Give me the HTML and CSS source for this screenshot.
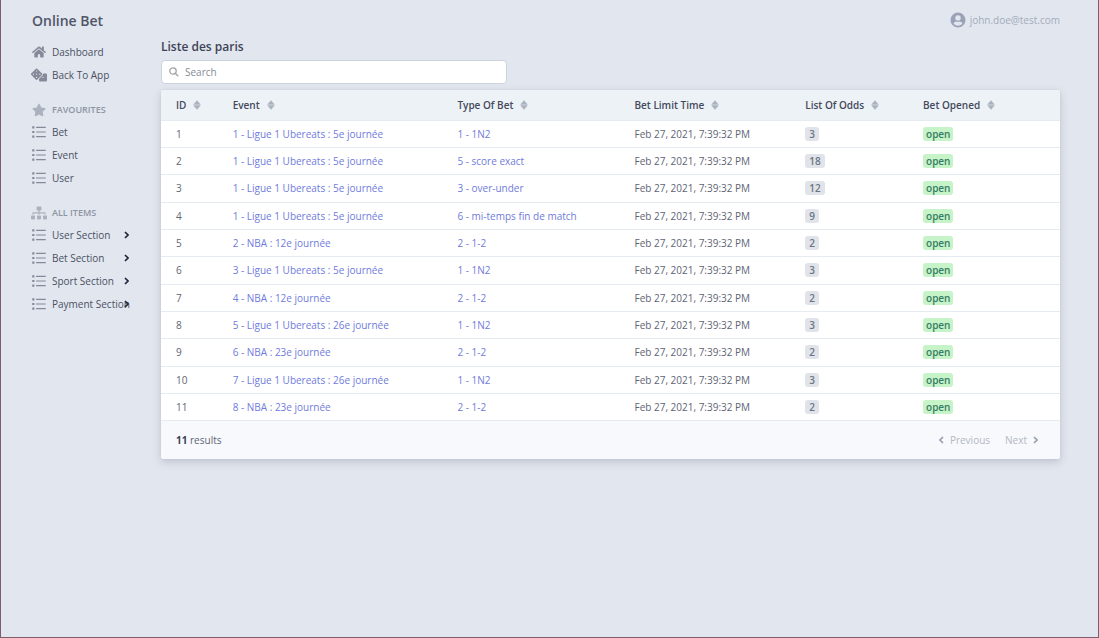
FILE: index.html
```html
<!DOCTYPE html>
<html lang="en">
<head>
<meta charset="utf-8">
<title>Online Bet</title>
<link rel="stylesheet" href="styles.css">
</head>
<body>
<svg class="sprite" aria-hidden="true">
  <symbol id="home" viewBox="0 0 576 512"><path d="M280 148 96 300v164a16 16 0 0 0 16 16h112a16 16 0 0 0 16-16v-96a16 16 0 0 1 16-16h64a16 16 0 0 1 16 16v96a16 16 0 0 0 16 16h112a16 16 0 0 0 16-16V300L296 148a12 12 0 0 0-16 0zM572 251l-84-69V44a12 12 0 0 0-12-12h-56a12 12 0 0 0-12 12v72l-89-74a48 48 0 0 0-61 0L4 251a12 12 0 0 0-1 17l25 31a12 12 0 0 0 17 2L280 107a12 12 0 0 1 16 0l235 194a12 12 0 0 0 17-2l25-31a12 12 0 0 0-1-17z"/></symbol>
  <symbol id="dice" viewBox="0 0 640 512"><path fill-rule="evenodd" d="M592 192H473c13 29 7 65-17 88L320 417v47a48 48 0 0 0 48 48h224a48 48 0 0 0 48-48V240a48 48 0 0 0-48-48zM480 376a24 24 0 1 1 0-48 24 24 0 0 1 0 48zM434 190 258 14a48 48 0 0 0-68 0L14 190a48 48 0 0 0 0 68l176 176a48 48 0 0 0 68 0l176-176a48 48 0 0 0 0-68zM96 248a24 24 0 1 1 0-48 24 24 0 0 1 0 48zm128 128a24 24 0 1 1 0-48 24 24 0 0 1 0 48zm0-128a24 24 0 1 1 0-48 24 24 0 0 1 0 48zm0-128a24 24 0 1 1 0-48 24 24 0 0 1 0 48zm128 128a24 24 0 1 1 0-48 24 24 0 0 1 0 48z"/></symbol>
  <symbol id="star" viewBox="0 0 576 512"><path d="m259 18-65 132-146 21c-26 4-37 36-18 55l106 103-25 145c-5 26 23 46 46 34l131-69 131 69c23 12 51-8 46-34l-25-145 106-103c19-19 8-51-18-55l-146-21-65-132c-12-24-46-24-58 0z"/></symbol>
  <symbol id="list" viewBox="0 0 512 512"><path d="M8 48h80v76H8zM8 218h80v76H8zM8 388h80v76H8zM150 66h354v42H150zM150 235h354v42H150zM150 404h354v42H150z"/></symbol>
  <symbol id="tree" viewBox="0 0 640 512"><path d="M128 352H32a32 32 0 0 0-32 32v96a32 32 0 0 0 32 32h96a32 32 0 0 0 32-32v-96a32 32 0 0 0-32-32zm-24-80h192v48h48v-48h192v48h48v-57c0-21-17-39-39-39H344v-64h40a32 32 0 0 0 32-32V32a32 32 0 0 0-32-32H256a32 32 0 0 0-32 32v96a32 32 0 0 0 32 32h40v64H95c-22 0-39 18-39 39v57h48zm264 80h-96a32 32 0 0 0-32 32v96a32 32 0 0 0 32 32h96a32 32 0 0 0 32-32v-96a32 32 0 0 0-32-32zm240 0h-96a32 32 0 0 0-32 32v96a32 32 0 0 0 32 32h96a32 32 0 0 0 32-32v-96a32 32 0 0 0-32-32z"/></symbol>
  <symbol id="right" viewBox="0 0 5 8"><path d="m1 1 3 3-3 3" fill="none" stroke="currentColor" stroke-width="1.7"/></symbol>
  <symbol id="left" viewBox="0 0 5 8"><path d="M4 1 1 4l3 3" fill="none" stroke="currentColor" stroke-width="1.7"/></symbol>
  <symbol id="sort" viewBox="0 0 8 10"><path d="M4 .6 7.300 4.400H.7zM4 9.400.7 5.600h6.600z" stroke="currentColor" stroke-width=".5" stroke-linejoin="round"/></symbol>
  <symbol id="search" viewBox="0 0 10 10"><g fill="none" stroke="currentColor" stroke-width="1.3"><circle cx="4" cy="4" r="3.200"/><path d="M6.400 6.400 9.300 9.300"/></g></symbol>
  <symbol id="user" viewBox="0 0 16 16"><path fill-rule="evenodd" d="M8 .5a7.500 7.500 0 1 0 0 15 7.500 7.500 0 0 0 0-15zm0 2.700a2.700 2.700 0 1 1 0 5.400 2.700 2.700 0 0 1 0-5.400zm0 10.500c-1.800 0-3.500-.9-4.400-2.200.5-1.200 1.700-1.900 2.900-1.900.9.400 2.100.4 3 0 1.200 0 2.400.7 2.900 1.900C11.500 12.800 9.800 13.700 8 13.700z"/></symbol>
</svg>
<div class="page">
  <aside class="sidebar">
    <a class="brand" href="#">Online Bet</a>
    <nav class="menu">
      <a class="item" href="#"><svg class="icon"><use href="#home"/></svg>Dashboard</a>
      <a class="item" href="#"><svg class="icon wide"><use href="#dice"/></svg>Back To App</a>
      <h2 class="group"><svg class="icon"><use href="#star"/></svg>FAVOURITES</h2>
      <a class="item" href="#"><svg class="icon"><use href="#list"/></svg>Bet</a>
      <a class="item" href="#"><svg class="icon"><use href="#list"/></svg>Event</a>
      <a class="item" href="#"><svg class="icon"><use href="#list"/></svg>User</a>
      <h2 class="group"><svg class="icon wide"><use href="#tree"/></svg>ALL ITEMS</h2>
      <a class="item" href="#"><svg class="icon"><use href="#list"/></svg><span class="label">User Section</span><svg class="chevron"><use href="#right"/></svg></a>
      <a class="item" href="#"><svg class="icon"><use href="#list"/></svg><span class="label">Bet Section</span><svg class="chevron"><use href="#right"/></svg></a>
      <a class="item" href="#"><svg class="icon"><use href="#list"/></svg><span class="label">Sport Section</span><svg class="chevron"><use href="#right"/></svg></a>
      <a class="item" href="#"><svg class="icon"><use href="#list"/></svg><span class="label">Payment Section</span><svg class="chevron"><use href="#right"/></svg></a>
    </nav>
  </aside>
  <main class="content">
    <header class="topbar"><a class="account" href="#"><svg class="avatar"><use href="#user"/></svg>john.doe@test.com</a></header>
    <h1 class="title">Liste des paris</h1>
    <label class="search"><svg class="search-icon"><use href="#search"/></svg><input class="search-input" type="search" placeholder="Search" aria-label="Search"></label>
    <section class="card">
      <table class="bets">
        <colgroup><col class="c-id"><col class="c-event"><col class="c-type"><col class="c-time"><col class="c-odds"><col></colgroup>
        <thead><tr>
          <th>ID<svg class="sort"><use href="#sort"/></svg></th>
          <th>Event<svg class="sort"><use href="#sort"/></svg></th>
          <th>Type Of Bet<svg class="sort"><use href="#sort"/></svg></th>
          <th>Bet Limit Time<svg class="sort"><use href="#sort"/></svg></th>
          <th>List Of Odds<svg class="sort"><use href="#sort"/></svg></th>
          <th>Bet Opened<svg class="sort"><use href="#sort"/></svg></th>
        </tr></thead>
        <tbody>
          <tr><td>1</td><td><a href="#">1 - Ligue 1 Ubereats : 5e journée</a></td><td><a href="#">1 - 1N2</a></td><td>Feb 27, 2021, 7:39:32 PM</td><td><span class="badge">3</span></td><td><span class="badge open">open</span></td></tr>
          <tr><td>2</td><td><a href="#">1 - Ligue 1 Ubereats : 5e journée</a></td><td><a href="#">5 - score exact</a></td><td>Feb 27, 2021, 7:39:32 PM</td><td><span class="badge">18</span></td><td><span class="badge open">open</span></td></tr>
          <tr><td>3</td><td><a href="#">1 - Ligue 1 Ubereats : 5e journée</a></td><td><a href="#">3 - over-under</a></td><td>Feb 27, 2021, 7:39:32 PM</td><td><span class="badge">12</span></td><td><span class="badge open">open</span></td></tr>
          <tr><td>4</td><td><a href="#">1 - Ligue 1 Ubereats : 5e journée</a></td><td><a href="#">6 - mi-temps fin de match</a></td><td>Feb 27, 2021, 7:39:32 PM</td><td><span class="badge">9</span></td><td><span class="badge open">open</span></td></tr>
          <tr><td>5</td><td><a href="#">2 - NBA : 12e journée</a></td><td><a href="#">2 - 1-2</a></td><td>Feb 27, 2021, 7:39:32 PM</td><td><span class="badge">2</span></td><td><span class="badge open">open</span></td></tr>
          <tr><td>6</td><td><a href="#">3 - Ligue 1 Ubereats : 5e journée</a></td><td><a href="#">1 - 1N2</a></td><td>Feb 27, 2021, 7:39:32 PM</td><td><span class="badge">3</span></td><td><span class="badge open">open</span></td></tr>
          <tr><td>7</td><td><a href="#">4 - NBA : 12e journée</a></td><td><a href="#">2 - 1-2</a></td><td>Feb 27, 2021, 7:39:32 PM</td><td><span class="badge">2</span></td><td><span class="badge open">open</span></td></tr>
          <tr><td>8</td><td><a href="#">5 - Ligue 1 Ubereats : 26e journée</a></td><td><a href="#">1 - 1N2</a></td><td>Feb 27, 2021, 7:39:32 PM</td><td><span class="badge">3</span></td><td><span class="badge open">open</span></td></tr>
          <tr><td>9</td><td><a href="#">6 - NBA : 23e journée</a></td><td><a href="#">2 - 1-2</a></td><td>Feb 27, 2021, 7:39:32 PM</td><td><span class="badge">2</span></td><td><span class="badge open">open</span></td></tr>
          <tr><td>10</td><td><a href="#">7 - Ligue 1 Ubereats : 26e journée</a></td><td><a href="#">1 - 1N2</a></td><td>Feb 27, 2021, 7:39:32 PM</td><td><span class="badge">3</span></td><td><span class="badge open">open</span></td></tr>
          <tr><td>11</td><td><a href="#">8 - NBA : 23e journée</a></td><td><a href="#">2 - 1-2</a></td><td>Feb 27, 2021, 7:39:32 PM</td><td><span class="badge">2</span></td><td><span class="badge open">open</span></td></tr>
        </tbody>
      </table>
      <footer class="pager">
        <p class="count"><strong>11</strong> results</p>
        <button class="page-button" type="button" disabled><svg class="chevron"><use href="#left"/></svg>Previous</button>
        <button class="page-button" type="button" disabled>Next<svg class="chevron"><use href="#right"/></svg></button>
      </footer>
    </section>
  </main>
</div>
</body>
</html>
```
FILE: styles.css
```css
* { box-sizing: border-box; }
body {
  margin: 0;
  font: 10px/16px "Open Sans", "Noto Sans", sans-serif;
  color: #5e6473;
  background: #e2e6ee;
}
a { color: inherit; text-decoration: none; }
svg { fill: currentColor; flex: none; }
.sprite { position: absolute; width: 0; height: 0; }
.page {
  display: flex;
  min-height: 100vh;
  padding: 0 38px 0 31px;
  border: solid #805d6b;
  border-width: 0 1px 1px;
}

.sidebar { width: 129px; flex: none; padding-top: 10px; }
.brand { display: block; font-size: 14px; font-weight: 600; line-height: 22px; color: #505568; }
.menu { padding-top: 8px; }
.item, .group { display: flex; align-items: center; gap: 6px; white-space: nowrap; }
.item { height: 23px; color: #4a5064; padding-right: 32px; }
.icon { width: 14px; height: 14px; color: #85899a; }
.icon.wide { width: 16px; margin: 0 -1px; }
.group { height: 21px; margin: 13px 0 0; font-size: 9px; font-weight: 600; color: #8d95a3; }
.group .icon { color: #acb1be; }
.label { flex: 1; min-width: 0; }
.chevron { width: 5px; height: 8px; }
.item .chevron { color: #22273a; }

.content { flex: 1; min-width: 0; }
.topbar { display: flex; justify-content: flex-end; height: 36px; padding-top: 12px; }
.account { display: flex; align-items: center; gap: 4px; height: 16px; color: #a3acbd; }
.avatar { width: 16px; height: 16px; color: #9ba2b7; }
.title { margin: 0; font-size: 12px; font-weight: 600; line-height: 21px; color: #3e4356; }
.search {
  display: flex;
  align-items: center;
  width: 346px;
  height: 24px;
  margin: 3px 0 6px;
  padding: 0 7px;
  gap: 6px;
  border: 1px solid #cdd3dd;
  border-radius: 4px;
  background: #fff;
}
.search-icon { width: 10px; height: 10px; color: #a0a2a8; }
.search-input { flex: 1; border: 0; padding: 0; outline: 0; background: none; font: inherit; color: inherit; }
.search-input::placeholder { color: #858b96; }

.card {
  overflow: hidden;
  border-radius: 3px;
  background: #fff;
  box-shadow: 0 3px 8px #bcc2ce, 0 0 2px #cdd2dc;
}
.bets { width: 100%; border-collapse: collapse; table-layout: fixed; }
.c-id { width: 6.3%; }
.c-event { width: 25%; }
.c-type { width: 19.7%; }
.c-time { width: 19%; }
.c-odds { width: 13.1%; }
th, td { padding: 0 0 0 15px; text-align: left; white-space: nowrap; border-bottom: 1px solid #e6eaf1; }
th { height: 30px; font-weight: 600; color: #44495a; background: #edf2f7; }
td { height: 27px; }
tr:nth-child(3n) td { height: 28px; }
td a { color: #707bdb; }
.sort { width: 8px; height: 10px; margin-left: 7px; vertical-align: -1px; color: #abb2be; }
.badge {
  display: inline-block;
  padding: 0 4px;
  border-radius: 3px;
  font-weight: 600;
  line-height: 14px;
  color: #6d7482;
  background: #e0e4ea;
}
.open { padding: 0 3px; color: #377d64; background: #c6f3c8; }
.pager { display: flex; align-items: center; gap: 15px; height: 38px; padding: 0 22px 0 15px; background: #f8f9fc; }
.count { flex: 1; margin: 0; }
.count strong { color: #3c4254; }
.page-button {
  display: flex;
  align-items: center;
  gap: 6px;
  padding: 0;
  border: 0;
  background: none;
  font: inherit;
  color: #b2b8c3;
}
.page-button .chevron { color: #989faf; }
```
